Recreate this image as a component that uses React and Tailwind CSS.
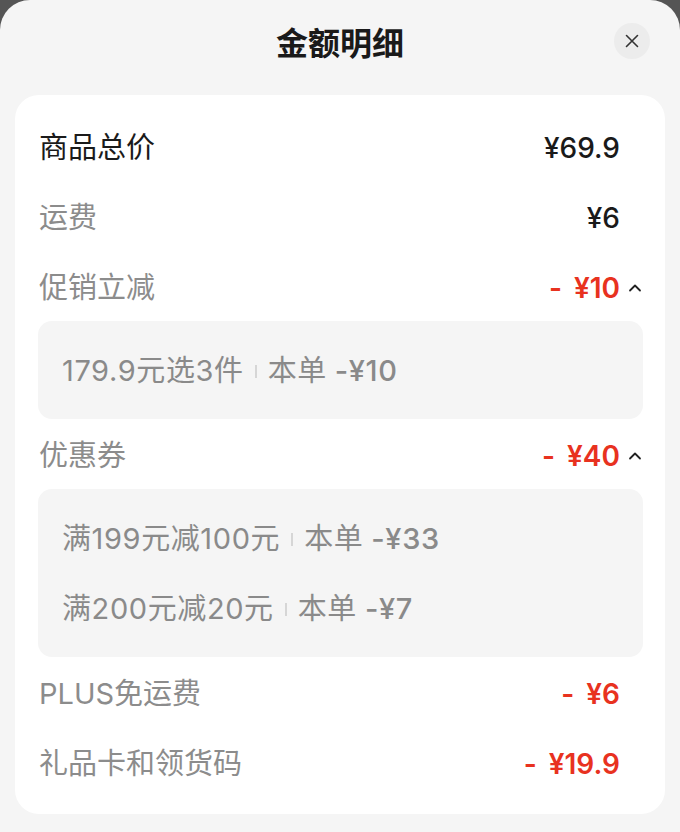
import React from "react";

const font = { fontFamily: 'Inter, "Noto Sans CJK SC", "Noto Sans", sans-serif' };

function Chevron() {
  return (
    <svg width="14" height="10" viewBox="0 0 14 10" fill="none">
      <path d="M2 7.5 L7 2.5 L12 7.5" stroke="#222" strokeWidth="1.8" strokeLinecap="round" strokeLinejoin="round" />
    </svg>
  );
}

function Row({ label, value, dark, red, chevron }) {
  return (
    <div className="flex h-[70px] items-center pt-[3px]">
      <div className={`flex-1 text-[29px] ${dark ? "text-[#1a1a1a]" : "text-[#8c8c8c]"}`}>{label}</div>
      <div className={`flex items-center text-[28px] ${red ? "font-semibold text-[#e8321f]" : "font-medium text-[#1a1a1a]"}`}>
        {red ? <span className="mr-[12px]">-</span> : null}
        <span>{value}</span>
      </div>
      <div className="flex w-[22px] justify-end">{chevron ? <Chevron /> : null}</div>
    </div>
  );
}

function Sep() {
  return <span className="mx-[11px] inline-block h-[13px] w-[2px] bg-[#d6d6d6]" />;
}

function SubLine({ left, amount }) {
  return (
    <div className="flex h-[70px] items-center pt-[2px] text-[29px] tracking-[0.6px] text-[#8a8a8a]">
      <span>{left}</span>
      <Sep />
      <span>本单 </span>
      <span className="ml-[8px] font-medium">-¥{amount}</span>
    </div>
  );
}

export default function App() {
  return (
    <div className="h-[832px] w-[680px] bg-[#555555]" style={font}>
      <div className="flex h-full flex-col rounded-t-[30px] bg-[#f5f5f5] px-[15px]">
        <div className="relative flex h-[95px] items-center justify-center pb-[8px]">
          <div className="text-[32px] font-bold text-[#1a1a1a]">金额明细</div>
          <div className="absolute right-[15px] top-[23px] flex h-[36px] w-[36px] items-center justify-center rounded-full bg-[#ececec]">
            <svg width="16" height="16" viewBox="0 0 16 16" fill="none">
              <path d="M2.5 2.5 L13.5 13.5 M13.5 2.5 L2.5 13.5" stroke="#333" strokeWidth="1.6" strokeLinecap="round" />
            </svg>
          </div>
        </div>
        <div className="rounded-[24px] bg-white pl-[24px] pr-[23px] pb-[17px] pt-[16px]">
          <Row label="商品总价" value="¥69.9" dark />
          <Row label="运费" value="¥6" />
          <Row label="促销立减" value="¥10" red chevron />
          <div className="mr-[-1px] ml-[-1px] rounded-[14px] bg-[#f5f5f5] px-[24px] py-[14px]">
            <SubLine left="179.9元选3件" amount="10" />
          </div>
          <Row label="优惠券" value="¥40" red chevron />
          <div className="mr-[-1px] ml-[-1px] rounded-[14px] bg-[#f5f5f5] px-[24px] py-[14px]">
            <SubLine left="满199元减100元" amount="33" />
            <SubLine left="满200元减20元" amount="7" />
          </div>
          <Row label="PLUS免运费" value="¥6" red />
          <Row label="礼品卡和领货码" value="¥19.9" red />
        </div>
      </div>
    </div>
  );
}
